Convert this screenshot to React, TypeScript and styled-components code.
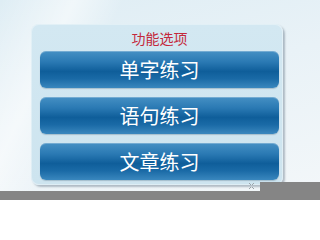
import React from 'react';
import styled, { createGlobalStyle } from 'styled-components';

const GlobalStyle = createGlobalStyle`
  html, body {
    margin: 0;
    padding: 0;
    width: 320px;
    height: 200px;
    overflow: hidden;
  }
  body {
    font-family: 'Noto Sans CJK SC', 'Noto Sans', sans-serif;
  }
`;

const Page = styled.div`
  width: 320px;
  height: 200px;
  display: flex;
  flex-direction: column;
  background:
    linear-gradient(115deg, rgba(255, 255, 255, 0) 0%, rgba(255, 255, 255, 0.55) 18%, rgba(255, 255, 255, 0) 30%),
    linear-gradient(165deg, #deedf4 0%, #e9f2f7 45%, #f3f7f9 100%);
`;

const Stage = styled.main`
  height: 182px;
  padding: 24px 0 0 31px;
  box-sizing: border-box;
`;

// Light blue rounded card holding the title and the menu buttons
const Panel = styled.section`
  width: 252px;
  height: 161px;
  box-sizing: border-box;
  padding: 0 4px 5px 9px;
  border-radius: 8px;
  background: linear-gradient(180deg, #d3e8f2 0%, #cde4ef 100%);
  box-shadow: 2px 2px 2px rgba(60, 80, 100, 0.35), inset 0 0 0 1px rgba(255, 255, 255, 0.35);
  display: flex;
  flex-direction: column;
`;

const Title = styled.h1`
  margin: 0;
  height: 27px;
  display: flex;
  align-items: center;
  justify-content: center;
  padding-top: 1px;
  box-sizing: border-box;
  font-size: 14px;
  font-weight: 400;
  color: #c4283c;
`;

const Menu = styled.div`
  display: flex;
  flex-direction: column;
  gap: 9px;
`;

const MenuButton = styled.button`
  height: 37px;
  width: 100%;
  border: none;
  border-radius: 6px;
  padding: 0;
  display: flex;
  align-items: center;
  justify-content: center;
  font-family: 'Noto Sans CJK SC', 'Noto Sans', sans-serif;
  font-size: 20px;
  color: #ffffff;
  background: linear-gradient(
    180deg,
    #4590c4 0%,
    #2a79b3 30%,
    #0f5e9a 55%,
    #1a6aa6 75%,
    #3a87be 100%
  );
  box-shadow: inset 0 1px 0 rgba(255, 255, 255, 0.25), 0 1px 1px rgba(40, 70, 100, 0.25);
  cursor: pointer;
`;

const Footer = styled.footer`
  height: 18px;
  display: flex;
  align-items: flex-end;
`;

const FooterLeft = styled.div`
  flex: 1;
  height: 18px;
  display: flex;
  flex-direction: column;
`;

const GripRow = styled.div`
  height: 9px;
  display: flex;
  justify-content: flex-end;
  align-items: flex-start;
  padding-right: 5px;
`;

const Strip = styled.div`
  height: 9px;
  background: #858585;
`;

const Tab = styled.div`
  width: 60px;
  height: 18px;
  background: #858585;
`;

const Grip: React.FC = () => (
  <svg width="7" height="8" viewBox="0 0 7 8" aria-hidden="true">
    <path d="M1 1 L3 3 M6 1 L4 3 M1 7 L3 5 M6 7 L4 5" stroke="#9aa4aa" strokeWidth="1" />
  </svg>
);

const items = ['单字练习', '语句练习', '文章练习'];

const App: React.FC = () => (
  <Page>
    <GlobalStyle />
    <Stage>
      <Panel>
        <Title>功能选项</Title>
        <Menu>
          {items.map((label) => (
            <MenuButton key={label}>{label}</MenuButton>
          ))}
        </Menu>
      </Panel>
    </Stage>
    <Footer>
      <FooterLeft>
        <GripRow>
          <Grip />
        </GripRow>
        <Strip />
      </FooterLeft>
      <Tab />
    </Footer>
  </Page>
);

export default App;
